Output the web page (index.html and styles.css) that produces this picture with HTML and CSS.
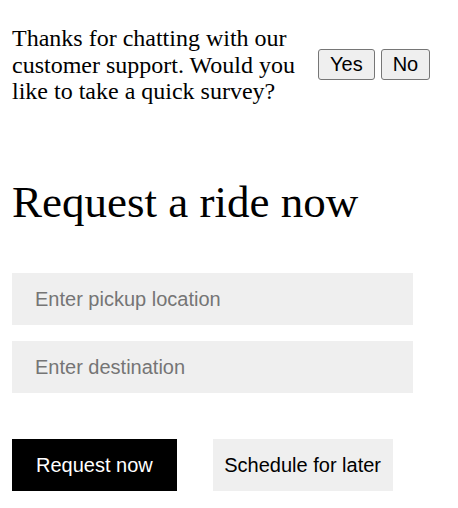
FILE: index.html
```html
<!DOCTYPE html>
<html>
<head>
<meta charset="utf-8">
<link rel="stylesheet" href="styles.css">
</head>
<body>
<div class="survey">
  <p class="survey-text">Thanks for chatting with our customer support. Would you like to take a quick survey?</p>
  <div class="survey-actions">
    <button class="survey-btn">Yes</button>
    <button class="survey-btn">No</button>
  </div>
</div>
<h1 class="title">Request a ride now</h1>
<div class="fields">
  <input class="field" type="text" placeholder="Enter pickup location">
  <input class="field" type="text" placeholder="Enter destination">
</div>
<div class="actions">
  <button class="btn btn-primary">Request now</button>
  <button class="btn btn-secondary">Schedule for later</button>
</div>
</body>
</html>
```

FILE: styles.css
```css
html, body {
  margin: 0;
  padding: 0;
  background: #ffffff;
}
body {
  padding: 25px 12px 0 12px;
  font-family: "Liberation Serif", "Times New Roman", serif;
  color: #000;
}
.survey {
  display: flex;
  align-items: center;
  gap: 16px;
}
.survey-text {
  margin: 0;
  width: 290px;
  font-size: 24px;
  line-height: 26.5px;
}
.survey-actions {
  display: flex;
  gap: 6px;
}
.survey-btn {
  font-family: "Liberation Sans", Arial, sans-serif;
  font-size: 20px;
  padding: 3px 11px;
  background: #efefef;
  border: 1px solid #767676;
  border-radius: 3px;
  color: #000;
}
.title {
  margin: 71px 0 0 0;
  font-size: 45px;
  font-weight: normal;
  line-height: 52px;
}
.fields {
  margin-top: 45.5px;
  display: flex;
  flex-direction: column;
  gap: 16px;
}
.field {
  box-sizing: border-box;
  width: 401px;
  height: 52px;
  border: none;
  background: #efefef;
  padding: 0 23px;
  font-family: "Liberation Sans", Arial, sans-serif;
  font-size: 20px;
  color: #000;
  outline: none;
}
.field::placeholder {
  color: #757575;
}
.actions {
  margin-top: 46px;
  display: flex;
  gap: 36px;
}
.btn {
  height: 52px;
  border: none;
  font-family: "Liberation Sans", Arial, sans-serif;
  font-size: 20px;
}
.btn-primary {
  background: #000;
  color: #fff;
  padding: 0 24px;
}
.btn-secondary {
  background: #efefef;
  color: #000;
  padding: 0 11.5px;
}
```
